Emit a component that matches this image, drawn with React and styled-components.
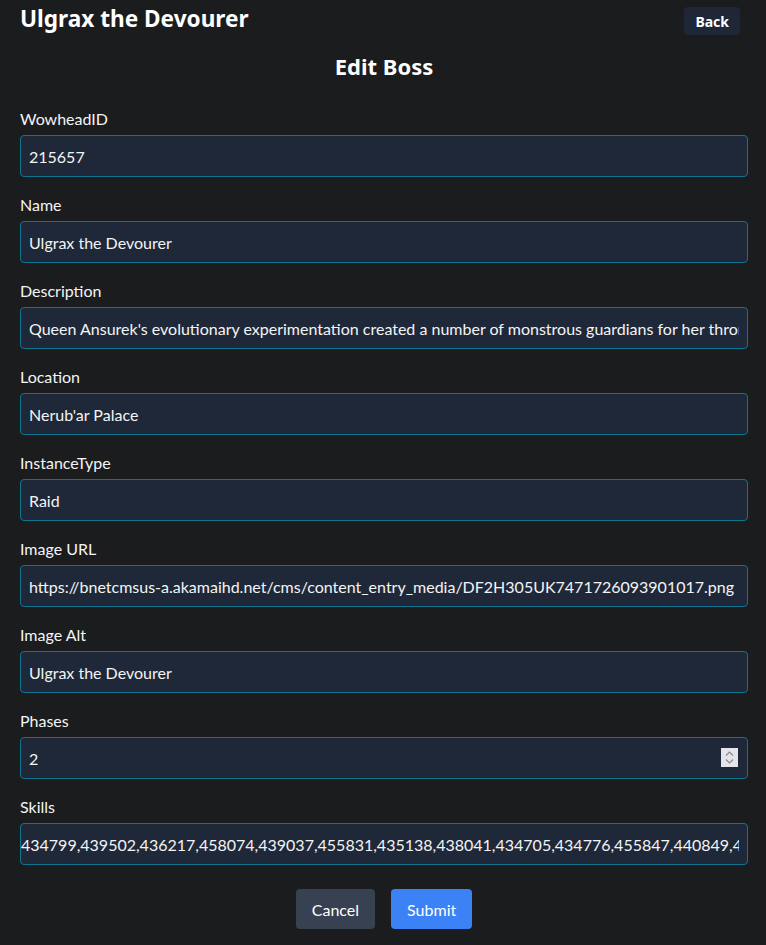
import React, { useState } from 'react';
import styled, { createGlobalStyle } from 'styled-components';

const GlobalStyle = createGlobalStyle`
  body {
    margin: 0;
    background: #1b1c1d;
    font-family: "Segoe UI", Lato, "Noto Sans", sans-serif;
    color: #f3f4f6;
  }
`;

const headingFont = `"Segoe UI", "Noto Sans", sans-serif`;

const Page = styled.div`
  padding: 6px 18px 16px 20px;
`;

const Header = styled.div`
  display: flex;
  justify-content: space-between;
  align-items: flex-start;
  padding-right: 8px;
`;

const BossTitle = styled.h1`
  margin: 0;
  font-family: ${headingFont};
  font-size: 22.6px;
  font-weight: 700;
  line-height: 26px;
  color: #ffffff;
`;

const BackButton = styled.button`
  margin-top: 1px;
  height: 28px;
  padding: 0 11px;
  background: #1f2637;
  color: #ffffff;
  border: none;
  border-radius: 4px;
  font-family: ${headingFont};
  font-size: 14px;
  font-weight: 700;
`;

const FormTitle = styled.h2`
  margin: 18px 0 30px;
  text-align: center;
  font-family: ${headingFont};
  font-size: 22px;
  font-weight: 700;
  line-height: 26px;
  color: #ffffff;
`;

const Form = styled.form`
  display: flex;
  flex-direction: column;
  gap: 18px;
`;

const Field = styled.div`
  display: flex;
  flex-direction: column;
  gap: 7px;
`;

const Label = styled.label`
  font-size: 16px;
  line-height: 19px;
  color: #f3f4f6;
`;

const InputWrap = styled.div`
  position: relative;
`;

const Input = styled.input`
  box-sizing: border-box;
  width: 100%;
  height: 42px;
  padding: 0 8px 0 ${p => (p.$scrolled ? 0 : 8)}px;
  background: #1f2838;
  border: 1px solid #0e7490;
  border-radius: 4px;
  color: #f3f4f6;
  font-family: inherit;
  font-size: 16px;
  outline: none;
`;

const Spinner = styled.div`
  position: absolute;
  right: 10px;
  top: 11px;
  width: 17px;
  height: 19px;
  background: #e6e4eb;
  display: flex;
  align-items: center;
  justify-content: center;
`;

const Actions = styled.div`
  display: flex;
  justify-content: center;
  gap: 16px;
  margin-top: 6px;
`;

const ActionButton = styled.button`
  height: 40px;
  padding: 0 16px;
  border: none;
  border-radius: 4px;
  background: ${p => (p.$primary ? '#3b82f6' : '#374151')};
  color: #ffffff;
  font-family: inherit;
  font-size: 16px;
`;

const fields = [
  { label: 'WowheadID', value: '215657' },
  { label: 'Name', value: 'Ulgrax the Devourer' },
  {
    label: 'Description',
    value:
      "Queen Ansurek's evolutionary experimentation created a number of monstrous guardians for her throne, and Ulgrax is the most voracious of them all.",
  },
  { label: 'Location', value: "Nerub'ar Palace" },
  { label: 'InstanceType', value: 'Raid' },
  {
    label: 'Image URL',
    value: 'https://bnetcmsus-a.akamaihd.net/cms/content_entry_media/DF2H305UK7471726093901017.png',
  },
  { label: 'Image Alt', value: 'Ulgrax the Devourer' },
  { label: 'Phases', value: '2', number: true },
  {
    label: 'Skills',
    value:
      '434799,439502,436217,458074,439037,455831,435138,438041,434705,434776,455847,440849,441451,445123',
    scrolled: true,
  },
];

const App = () => {
  const [values, setValues] = useState(fields.map(f => f.value));

  const update = (i, v) => setValues(prev => prev.map((x, j) => (j === i ? v : x)));

  return (
    <Page>
      <GlobalStyle />
      <Header>
        <BossTitle>Ulgrax the Devourer</BossTitle>
        <BackButton>Back</BackButton>
      </Header>
      <FormTitle>Edit Boss</FormTitle>
      <Form onSubmit={e => e.preventDefault()}>
        {fields.map((f, i) => (
          <Field key={f.label}>
            <Label>{f.label}</Label>
            <InputWrap>
              <Input
                type="text"
                value={values[i]}
                $scrolled={f.scrolled}
                onChange={e => update(i, e.target.value)}
              />
              {f.number && (
                <Spinner>
                  <svg width="11" height="15" viewBox="0 0 11 15" fill="none" stroke="#8a8a8f" strokeWidth="1.2">
                    <path d="M2 5.5 L5.5 2 L9 5.5" />
                    <path d="M2 9.5 L5.5 13 L9 9.5" />
                  </svg>
                </Spinner>
              )}
            </InputWrap>
          </Field>
        ))}
        <Actions>
          <ActionButton type="button">Cancel</ActionButton>
          <ActionButton type="submit" $primary>Submit</ActionButton>
        </Actions>
      </Form>
    </Page>
  );
};

export default App;
